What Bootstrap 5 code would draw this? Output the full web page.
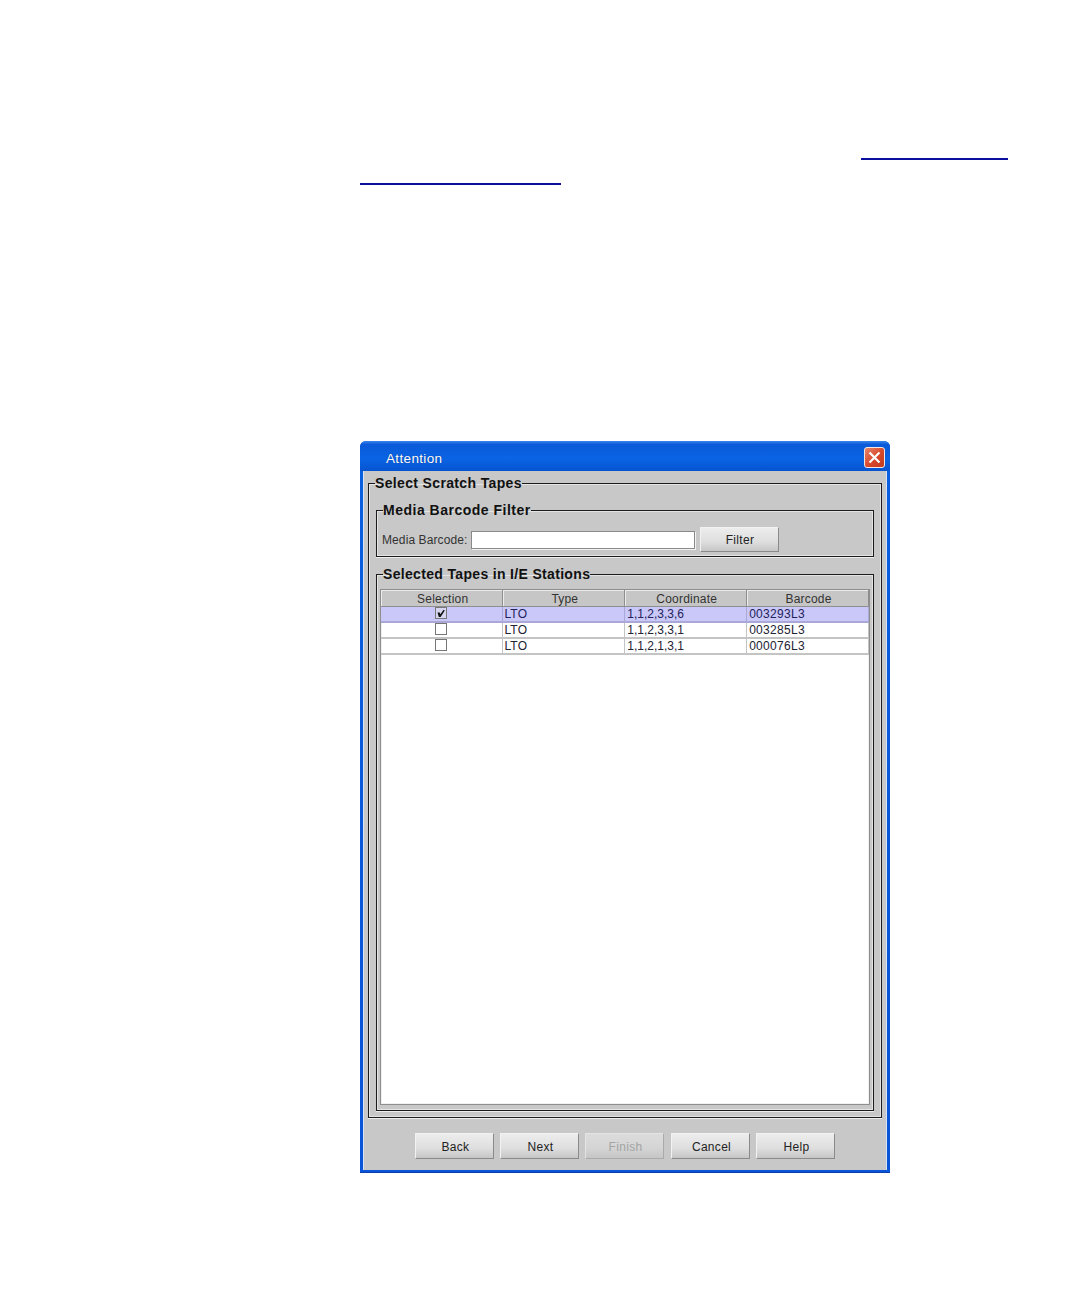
<!DOCTYPE html>
<html lang="en">
<head>
<meta charset="utf-8">
<title>Attention</title>
<link href="https://cdn.jsdelivr.net/npm/bootstrap@5.3.0/dist/css/bootstrap.min.css" rel="stylesheet">
<style>
body{background:#fff;margin:0;font-family:"Liberation Sans",Arial,sans-serif;color:#222}
.page-sheet{width:1080px;height:1296px;padding-top:158px}
.rule-one,.rule-two{height:2px;background:#0a0f9e}
.rule-one{width:147px;margin-left:861px}
.rule-two{width:201px;margin-left:360px;margin-top:23px}
.dlg{width:530px;height:732px;margin:256px 0 0 360px;background:linear-gradient(#0a5fe0,#0a54d8);border-radius:6px 6px 0 0;padding:0 3px 3px;border-bottom:1px solid #0a3fb0}
.dlg-title{height:30px;color:#fff;font-size:13.5px;letter-spacing:.35px;text-shadow:0 0 1px #03308c;background:linear-gradient(#3a86ee 0,#0a5ad8 12%,#0a64e4 60%,#0754d0 100%);margin:0 -3px;padding:2px 5px 0 26px;border-radius:6px 6px 0 0}
.dlg-title span{padding-top:4px}
.dlg-close{width:21px;height:21px;border:1px solid #f4e8e4;border-radius:3px;background:linear-gradient(135deg,#e8876a,#d8482a 55%,#c03a20);padding:0;display:flex}
.dlg-body{height:699px;background:#c8c8c8;padding:5px 4px 0 4px;border-left:1px solid #d8e4f4;border-right:1px solid #d8e4f4}
fieldset.grp{border:1px solid #1c1c1c;box-shadow:0 0 0 1px #e4e4e4 inset,0 1px 0 #eee;padding:0 7px;margin:0;min-width:0}
fieldset.grp legend{float:none;width:auto;margin:0;padding:0;font-size:14px;line-height:14px;font-weight:700;letter-spacing:.35px;color:#111;white-space:nowrap}
.grp-outer{height:642px}
.grp-filter{height:54px;margin-top:13px!important}
.grp-tapes{height:544px;margin-top:10px!important;padding:8px 3px 3px!important}
fieldset.grp-outer>legend{margin-left:-1px}
fieldset.grp-filter>legend{margin-left:-1px;letter-spacing:.5px}
fieldset.grp-tapes>legend{margin-left:3px;letter-spacing:.33px}
.fld-lab{font-size:12px;letter-spacing:.1px;color:#333;margin-right:4px}
.fld-in{width:224px;height:18px;background:#fff;border:1px solid #8a8a8a;box-shadow:1px 1px 0 #f2f2f2}
.xp-btn{width:79px;height:26px;padding:1px 0 0 2px;border-radius:0;border:1px solid;border-color:#f2f2f2 #8a8a8a #8a8a8a #f2f2f2;background:linear-gradient(#ededed,#dedede 60%,#c6c6c6);font-size:12px;letter-spacing:.3px;color:#222;line-height:24px}
.xp-btn:disabled{color:#a4a4a4;opacity:1;background:linear-gradient(#dcdcdc,#d4d4d4 60%,#c6c6c6);border-color:#e4e4e4 #aaa #aaa #e4e4e4}
.filter-btn{margin-left:5px;padding:0;height:25px}
.filter-row{margin-left:-2px;margin-top:10px}
.table-box{height:516px;background:#fff;border:1px solid #8e8e8e;box-shadow:0 0 0 1px #f0f0f0 inset;overflow:hidden}
.tape-grid{width:488px;table-layout:fixed;border-collapse:collapse;margin:0;font-size:12px;letter-spacing:.2px;--bs-table-bg:transparent}
.tape-grid th,.tape-grid td{padding:0 1px;height:16px;line-height:14px;font-weight:400;border:1px solid #c4c4c4;border-width:0 1px 2px 0;color:#223;white-space:nowrap;overflow:hidden}
.tape-grid th{text-align:center;vertical-align:bottom;background:#c6c6c6;color:#333;border-color:#8e8e8e;border-width:0 1px 1px 0;box-shadow:inset 1px 1px 0 #ececec;padding:1px 1px 0 3px}
.tape-grid td.coord-cell{letter-spacing:0;padding-left:2px}
.tape-grid td.code-cell{letter-spacing:.3px;padding-left:2px}
.tape-grid tr.picked td{background:#c9c8f8;color:#22225a;border-color:#a9a8d6}
.tape-grid td.chk-cell{text-align:center;padding:0 1px 0 0}
.chk-box{display:inline-block;width:12px;height:12px;background:#fff;border:1px solid #777;vertical-align:-1px}
.picked .chk-box{background:#d6d6f0}
.chk-box svg{display:block}
.foot-row{margin-top:15px;gap:6px;padding-left:47px}
.foot-gap{margin-left:1px}
</style>
</head>
<body>
<div class="page-sheet">
  <div class="rule-one"></div>
  <div class="rule-two"></div>
  <div class="dlg">
    <div class="dlg-title d-flex align-items-center justify-content-between">
      <span>Attention</span>
      <button class="dlg-close" type="button" aria-label="Close">
        <svg width="19" height="19" viewBox="0 0 19 19"><path d="M4.5 4.5L14.5 14.5M14.5 4.5L4.5 14.5" stroke="#fff" stroke-width="2.2" fill="none"/></svg>
      </button>
    </div>
    <div class="dlg-body">
      <fieldset class="grp grp-outer">
        <legend>Select Scratch Tapes</legend>
        <fieldset class="grp grp-filter">
          <legend>Media Barcode Filter</legend>
          <div class="filter-row d-flex align-items-center">
            <span class="fld-lab">Media Barcode:</span>
            <div class="fld-in"></div>
            <button class="xp-btn btn filter-btn" type="button">Filter</button>
          </div>
        </fieldset>
        <fieldset class="grp grp-tapes">
          <legend>Selected Tapes in I/E Stations</legend>
          <div class="table-box">
            <table class="table tape-grid">
              <thead><tr><th>Selection</th><th>Type</th><th>Coordinate</th><th>Barcode</th></tr></thead>
              <tbody>
                <tr class="picked"><td class="chk-cell"><span class="chk-box"><svg width="10" height="10" viewBox="0 0 10 10"><path d="M1.5 4.5L3.8 4.5L4.4 6.2L7.6 1.8L8.8 2.4L4.6 9L2.8 9Z" fill="#111"/></svg></span></td><td>LTO</td><td class="coord-cell">1,1,2,3,3,6</td><td class="code-cell">003293L3</td></tr>
                <tr><td class="chk-cell"><span class="chk-box"></span></td><td>LTO</td><td class="coord-cell">1,1,2,3,3,1</td><td class="code-cell">003285L3</td></tr>
                <tr><td class="chk-cell"><span class="chk-box"></span></td><td>LTO</td><td class="coord-cell">1,1,2,1,3,1</td><td class="code-cell">000076L3</td></tr>
              </tbody>
            </table>
          </div>
        </fieldset>
      </fieldset>
      <div class="foot-row d-flex">
        <button class="xp-btn btn" type="button">Back</button>
        <button class="xp-btn btn" type="button">Next</button>
        <button class="xp-btn btn" type="button" disabled>Finish</button>
        <button class="xp-btn btn foot-gap" type="button">Cancel</button>
        <button class="xp-btn btn" type="button">Help</button>
      </div>
    </div>
  </div>
</div>
</body>
</html>
